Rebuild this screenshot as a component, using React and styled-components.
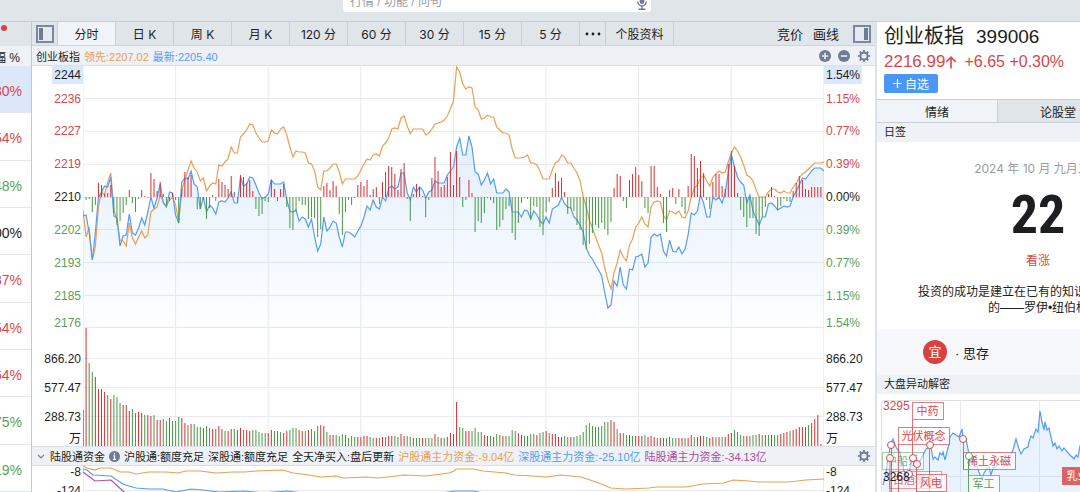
import React from "react";

import styled, { createGlobalStyle, css } from "styled-components";

const COLOR = {
  red: "#d9474a",
  green: "#57a158",
  black: "#1c1e22",
  orange: "#ea9f52",
  blue: "#559cf6",
  purple: "#b04aa8",
  icon: "#6f7b92",
  bar: "#e0e5ea",
  soft: "#eef1f6",
  line: "#c9ced6",
  grid: "#e8eaed",
};

const STEP = 741 / 240;

const LEAD = [
  144, 171, 161, 194, 181, 141, 126, 129, 116, 107, 144, 154, 174, 175, 180, 157, 172, 178, 171, 165,
  172, 169, 146, 143, 141, 129, 136, 140, 134, 131, 139, 156, 124, 114, 104, 95, 102, 106, 115, 112,
  125, 120, 117, 118, 99, 100, 96, 93, 81, 87, 87, 71, 68, 64, 58, 59, 67, 72, 76, 76,
  75, 64, 67, 68, 63, 61, 69, 81, 91, 85, 86, 86, 87, 97, 98, 105, 121, 124, 105, 105,
  102, 98, 98, 106, 118, 113, 113, 113, 113, 110, 104, 98, 93, 94, 89, 88, 90, 80, 77, 72,
  63, 62, 63, 52, 50, 60, 68, 63, 63, 63, 63, 69, 67, 63, 58, 57, 56, 54, 50, 43,
  35, 1, 6, 18, 23, 21, 22, 41, 44, 53, 52, 49, 51, 51, 61, 64, 67, 67, 69, 83,
  92, 92, 92, 91, 89, 97, 97, 99, 105, 113, 113, 113, 104, 97, 95, 89, 91, 97, 97, 102,
  107, 115, 131, 141, 154, 162, 171, 179, 187, 202, 214, 223, 207, 197, 184, 191, 195, 179, 173, 161,
  157, 151, 158, 161, 141, 136, 135, 136, 149, 154, 145, 146, 148, 145, 151, 152, 145, 131, 122, 119,
  112, 109, 115, 120, 111, 108, 105, 107, 106, 96, 87, 81, 85, 91, 99, 109, 111, 115, 124, 131,
  131, 131, 126, 123, 123, 126, 127, 125, 127, 127, 121, 117, 112, 108, 106, 103, 100, 97, 97, 97,
  96,
];

const LATEST = [
  150, 149, 167, 194, 167, 132, 126, 120, 121, 111, 150, 152, 180, 170, 169, 148, 167, 169, 162, 152,
  159, 146, 131, 142, 132, 118, 137, 141, 126, 127, 149, 157, 116, 112, 113, 105, 118, 121, 143, 131,
  146, 139, 142, 148, 136, 135, 136, 132, 126, 137, 137, 111, 120, 118, 111, 112, 119, 127, 133, 131,
  128, 114, 118, 118, 118, 116, 134, 145, 146, 144, 155, 151, 153, 161, 153, 171, 185, 178, 151, 165,
  161, 155, 157, 171, 181, 166, 166, 168, 171, 165, 160, 151, 140, 144, 134, 141, 143, 131, 135, 122,
  120, 123, 121, 107, 107, 127, 134, 121, 126, 121, 124, 132, 126, 124, 115, 117, 117, 117, 109, 105,
  101, 81, 72, 89, 89, 70, 81, 106, 108, 119, 114, 107, 118, 113, 127, 127, 127, 123, 126, 146,
  146, 146, 151, 144, 145, 153, 145, 149, 155, 158, 151, 157, 143, 141, 139, 131, 138, 141, 142, 151,
  154, 159, 166, 182, 189, 193, 199, 204, 210, 227, 242, 239, 215, 220, 201, 219, 223, 203, 204, 191,
  190, 188, 201, 197, 171, 168, 170, 168, 185, 190, 174, 185, 186, 181, 188, 183, 169, 147, 149, 145,
  129, 137, 151, 151, 131, 134, 131, 137, 127, 106, 89, 101, 111, 116, 119, 137, 129, 145, 152, 159,
  151, 151, 138, 137, 140, 144, 142, 140, 141, 140, 131, 125, 119, 112, 113, 109, 105, 102, 102, 102,
  105,
];

// above zero: buying, below zero: selling
const FORCE = [
  0, -3, -2, -15, -8, 14, 12, 3, 4, 12, -16, -28, -24, -16, -8, 7, -6, -15, -2, 7,
  1, -1, 24, 18, 6, 15, 3, -9, -4, 4, -3, -26, 8, 25, 20, 22, 0, -12, -12, -3,
  -22, -11, 2, -4, 18, 15, 12, 8, 21, 5, -6, 22, 20, 14, 17, 6, -12, -19, -17, -4,
  -5, 17, 8, -4, 8, 13, -10, -31, -33, -15, -4, -8, -8, -22, -20, -21, -40, -32, 11, 14,
  7, 16, 11, -17, -38, -15, -3, -8, -1, 12, 15, 11, 17, 2, 8, 10, -7, 15, 25, 31,
  30, 23, 7, 28, 34, -2, -24, 3, 13, 10, 1, -20, -3, 19, 40, 26, 10, 12, 20, 45,
  12, 46, 20, -10, -3, 17, 4, -35, -24, -26, -16, -1, -3, -6, -33, -30, -23, -12, -9, -36,
  -43, -26, -6, -1, -2, -22, -9, -10, -30, -38, -15, -5, 9, 24, 16, 19, 5, -17, -12, -14,
  -28, -33, -48, -52, -47, -36, -28, -31, -26, -32, -38, -25, 9, 23, 21, -4, -11, 17, 23, 30,
  22, 16, -11, -16, 31, 31, 10, 3, -26, -35, 7, 9, -7, 8, -10, -17, 11, 43, 41, 29,
  36, 24, -3, -12, 15, 23, 23, 11, 8, 33, 46, 31, 4, -13, -20, -30, -21, -21, -37, -39,
  -20, -10, 3, 10, 1, -13, -9, -2, -4, -5, 6, 14, 21, 17, 8, 7, 10, 10, 10, 10,
];

// negative values are the minutes that closed lower
const VOLUME = [
  0, 118, -83, -74, 69, 57, 57, 54, -51, 47, -51, -49, -43, 41, 41, 35, -37, -33, 34, 33,
  -31, 31, 30, -31, 26, 26, -27, -25, 28, -25, -25, -29, 28, 23, -21, 22, -22, -19, -19, 18,
  -20, -18, 17, -17, 20, 17, -15, 15, 17, -17, 16, 18, -16, 16, 15, -16, -16, -14, -13, -13,
  13, 16, -15, -15, -14, 13, 15, -16, -18, -18, 16, 15, -15, 16, -17, -15, -20, 21, 20, -14,
  11, 11, -11, -10, -12, 11, -8, -10, -9, 9, 9, 10, 10, -9, -8, 8, -8, 9, -9, 10,
  10, -10, -9, 12, 10, -10, -9, 8, -8, -8, 8, -8, -8, -8, 12, -9, 8, -8, 9, 13,
  12, 44, -19, -18, 15, 15, -15, -18, -14, -14, 11, 10, -10, 9, -12, -11, 10, -10, -10, -16,
  -15, 13, 11, -10, 10, -12, -12, 11, -13, -14, 15, -13, 12, 12, 9, 9, -10, -9, 9, -9,
  -10, -11, -14, -21, -23, -20, -19, -19, -20, -24, -24, 26, 24, -17, 13, -13, -11, 11, -10, 10,
  10, 10, -11, 9, 10, 9, -8, 8, 8, -8, 9, -8, -8, 8, 8, -8, 8, 11, -9, 9,
  10, -10, -9, 8, 9, -9, 9, -9, 9, 12, 13, -16, -14, -11, -10, 10, -10, -11, -11, 12,
  -11, 11, -11, 11, -11, -11, 12, 13, 14, -15, 16, 17, 19, 19, 19, -21, 23, 27, 31, 2,
  0, -44,
];

const FUND_SH =
  "0,0 4,2 12,4 17,2 28,2 37,6 46,6 53,8 66,6 83,6 95,7 103,5 117,5 133,7 150,6 162,6 173,5 200,4 210,7 226,9 238,11 253,10 260,12 283,11 296,12 321,9 343,10 366,7 371,5 373,3 390,3 400,5 423,7 431,9 450,10 463,11 478,9 498,11 513,16 528,22 543,23 566,22 573,21 603,21 620,18 641,17 650,14 666,15 676,16 706,16 723,14 741,13";
const FUND_SZ =
  "0,3 4,4 10,9 28,10 40,18 46,20 53,22 66,23 80,23 93,26 108,23 120,24 136,26 161,25 180,27 204,25 240,30 340,30 372,25 391,25 420,32 741,44";
const FUND_ALL = "0,6 12,15 28,14 41,26 60,36 741,56";

const MINI =
  "1,84 4,72 6,58 9,42 11,38 14,46 18,52 22,70 26,76 30,58 34,62 38,60 44,48 49,46 51,58 53,56 56,59 58,52 60,54 61,51 63,59 65,51 67,43 68,36 71,32 74,34 77,36 80,28 81,36 84,38 87,53 89,52 91,58 93,66 95,65 97,71 100,78 102,72 104,69 107,66 109,74 111,67 114,66 117,61 121,60 126,62 129,53 131,49 134,38 137,48 139,53 142,48 146,46 147,41 149,35 151,37 154,28 156,31 158,10 160,21 162,29 163,21 165,29 167,27 169,36 171,45 173,42 175,48 177,45 180,50 182,47 186,52 189,55 192,58 194,54 196,56 198,45 210,52 240,40 312,60";

const QUOTES = [
  ["+0.30%", "red"],
  ["+0.54%", "red"],
  ["-0.48%", "green"],
  ["0.00%", "black"],
  ["+0.37%", "red"],
  ["+0.54%", "red"],
  ["+0.64%", "red"],
  ["-0.75%", "green"],
  ["-0.19%", "green"],
];

const PERIODS = ["分时", "日 K", "周 K", "月 K", "120 分", "60 分", "30 分", "15 分", "5 分"];

const PRICES = [
  ["2236", "1.15%", "red", 31],
  ["2227", "0.77%", "red", 33],
  ["2219", "0.39%", "red", 33],
  ["2210", "0.00%", "black", 33],
  ["2202", "0.39%", "green", 33],
  ["2193", "0.77%", "green", 33],
  ["2185", "1.15%", "green", 33],
  ["2176", "1.54%", "green", 20],
];

const VOLUMES = ["866.20", "577.47", "288.73", "万"];

const GlobalStyle = createGlobalStyle`
  * {
    box-sizing: border-box;
  }
  body {
    margin: 0;
    color: ${COLOR.black};
    background: #fff;
    font-family: "Liberation Sans", "Noto Sans CJK SC", sans-serif;
    font-size: 12px;
  }
  button {
    padding: 0;
    border: 0;
    background: none;
    color: inherit;
    font: inherit;
    cursor: pointer;
  }
  svg {
    display: block;
    flex-shrink: 0;
  }
`;

const Page = styled.div`
  display: flex;
  flex-direction: column;
  height: 100vh;
  overflow: hidden;
`;
const TopBar = styled.header`
  display: flex;
  justify-content: center;
  align-items: flex-start;
  flex-shrink: 0;
  height: 22px;
  padding-right: 86px;
  background: ${COLOR.bar};
  border-bottom: 1px solid ${COLOR.line};
`;
const Search = styled.label`
  display: flex;
  align-items: center;
  width: 308px;
  height: 20px;
  margin-top: -8px;
  padding: 0 4px 0 7px;
  border-radius: 3px;
  background: #fff;
`;
const SearchInput = styled.input`
  flex: 1;
  min-width: 0;
  padding: 0;
  border: 0;
  outline: 0;
  background: none;
  font: inherit;

  &::placeholder {
    color: #979ca4;
  }
`;
const Body = styled.div`
  display: grid;
  grid-template-columns: 32px minmax(0, 1fr) 205px;
  flex: 1;
  min-height: 0;
`;

const List = styled.aside`
  display: flex;
  flex-direction: column;
  overflow: hidden;
  border-right: 1px solid #c0c8d4;
`;
const ListTop = styled.div`
  flex-shrink: 0;
  height: 24px;
  padding: 3px 1px;
  background: ${COLOR.bar};
`;
const Dot = styled.div`
  width: 6px;
  height: 6px;
  border-radius: 50%;
  background: #dc3f3f;
`;
const ListHead = styled.div`
  display: flex;
  justify-content: flex-end;
  align-items: center;
  flex-shrink: 0;
  height: 20px;
  padding-right: 11px;
  background: ${COLOR.soft};
  white-space: nowrap;
`;
const ListCell = styled.div`
  display: flex;
  justify-content: flex-end;
  align-items: center;
  flex: 1;
  padding: 4px 9px 0 0;
  border-bottom: 1px solid #e3e6ea;
  background: ${({ $active }) => ($active ? "#dce8fa" : "#fff")};
  color: ${({ $tone }) => COLOR[$tone]};
  font-size: 14px;
`;

const Center = styled.main`
  display: flex;
  flex-direction: column;
  min-width: 0;
  overflow: hidden;
`;
const Tabs = styled.nav`
  display: flex;
  flex-shrink: 0;
  height: 24px;
  background: ${COLOR.bar};
  border-bottom: 1px solid #cfd4db;
  font-family: Inter, "Noto Sans CJK SC", sans-serif;
`;
const IconButton = styled.button`
  width: 26px;
  padding-left: 4px;
  border-right: 1px solid ${COLOR.line};
`;
const Tab = styled.button`
  display: flex;
  justify-content: center;
  align-items: center;
  width: ${({ $w = 58 }) => $w}px;
  border-right: 1px solid ${COLOR.line};
  background: ${({ $active }) => ($active ? "#f0f3f7" : "transparent")};
  white-space: nowrap;
`;
const Tools = styled.div`
  display: flex;
  gap: 10px;
  margin-left: auto;
  padding-right: 4px;
`;
const ToolButton = styled.button`
  font-size: 13px;

  &:last-child {
    padding-left: 4px;
  }
`;
const InfoBar = styled.div`
  display: flex;
  align-items: center;
  gap: 4px;
  flex-shrink: 0;
  height: 20px;
  padding: 0 4px;
  background: ${COLOR.soft};
  border-bottom: 1px solid #dcdfe4;
  font-size: 11px;
  white-space: nowrap;
  ${({ $top }) =>
    $top &&
    css`
      border-top: 1px solid #dcdfe4;
    `}
`;
const InfoText = styled.span`
  color: ${({ $tone = "black" }) => COLOR[$tone]};
`;
const InfoTools = styled.div`
  display: flex;
  align-items: center;
  gap: 7px;
  margin-left: auto;
`;
const PlainButton = styled.button`
  display: flex;
`;
const FundName = styled.button`
  display: flex;
  align-items: center;
  gap: 5px;
  padding-left: 1px;
`;
const ChartRow = styled.div`
  display: grid;
  grid-template-columns: 51px minmax(0, 1fr) 51px;
  flex-shrink: 0;
`;
const Plot = styled.svg`
  width: 100%;
  height: ${({ $h }) => $h}px;
`;
const AxisColumn = styled.div`
  display: flex;
  flex-direction: column;
  align-items: ${({ $left }) => ($left ? "flex-end" : "flex-start")};
`;
const AxisPeak = styled.div`
  height: 18px;
  padding: 0 2px;
  background: #dbe7fb;
  line-height: 19px;
`;
const AxisLabel = styled.div`
  height: ${({ $h }) => $h}px;
  padding: 0 2px;
  color: ${({ $tone = "black" }) => COLOR[$tone]};
  line-height: ${({ $h }) => $h}px;
`;
const VolumeLabels = styled.div`
  padding-top: 12px;
  text-align: ${({ $left }) => ($left ? "right" : "left")};
`;

const Side = styled.aside`
  overflow: hidden;
  border-left: 2px solid #dde2e8;
`;
const SideInner = styled.div`
  min-width: 322px;
`;
const Summary = styled.div`
  height: 77px;
  padding: 0 7px;
`;
const Title = styled.div`
  display: flex;
  align-items: baseline;
  gap: 12px;
  height: 28px;
  font-size: 20px;
  line-height: 28px;
`;
const Code = styled.span`
  font-size: 19px;
`;
const Price = styled.div`
  display: flex;
  align-items: center;
  height: 24px;
  color: ${COLOR.red};
  font-size: 17px;
`;
const Change = styled.span`
  padding-left: 7px;
  font-size: 16px;
`;
const AddButton = styled.button`
  display: flex;
  justify-content: center;
  align-items: center;
  gap: 3px;
  width: 54px;
  height: 19px;
  border-radius: 2px;
  background: #4a97f6;
  color: #fff;
`;
const SideTabs = styled.div`
  display: flex;
  height: 24px;
  background: ${COLOR.bar};
  border: 1px solid ${COLOR.line};
  border-width: 1px 0;
`;
const SideTab = styled.button`
  width: 121px;
  border-right: 1px solid ${COLOR.line};
  background: ${({ $active }) => ($active ? "#f0f3f7" : "transparent")};
`;
const Section = styled.div`
  height: 19px;
  padding-left: 7px;
  background: ${COLOR.soft};
  font-size: 11px;
  line-height: 18px;
`;
const Calendar = styled.div`
  height: 187px;
  padding-top: 18px;
  text-align: center;
`;
const Today = styled.div`
  color: #9a9da3;
  font-family: Inter, "Noto Sans CJK SC", sans-serif;
  line-height: 18px;
`;
const Day = styled.div`
  height: 74px;
  font-family: "Roboto Condensed", Roboto, sans-serif;
  font-size: 54px;
  font-weight: 700;
  line-height: 74px;
`;
const Mood = styled.div`
  color: ${COLOR.red};
  line-height: 18px;
`;
const Saying = styled.p`
  margin: 14px 0 0;
  line-height: 16px;
`;
const Advice = styled.div`
  display: flex;
  align-items: center;
  gap: 8px;
  height: 46px;
  padding-left: 46px;
  background: #f7f8fb;
  font-size: 13px;
`;
const Badge = styled.span`
  width: 24px;
  height: 24px;
  border-radius: 50%;
  background: #d8413f;
  color: #fff;
  line-height: 24px;
  text-align: center;
`;
const MoveBox = styled.div`
  margin: 6px 4px 0;
  border: 1px solid #dcdfe4;
  border-radius: 4px;
`;

const toPoints = (values) => values.map((v, i) => `${(i * STEP).toFixed(1)},${v}`).join(" ");

const Gear = () => (
  <svg width="14" height="14" viewBox="0 0 14 14" aria-hidden="true">
    <circle cx="7" cy="7" r="3.6" fill="none" stroke={COLOR.icon} strokeWidth="2" />
    {[0, 45, 90, 135, 180, 225, 270, 315].map((deg) => (
      <path key={deg} d="M5.9 2.8 L6.2 0.9 H7.8 L8.1 2.8 Z" fill={COLOR.icon} transform={`rotate(${deg} 7 7)`} />
    ))}
  </svg>
);

const Sign = ({ plus }) => (
  <svg width="12" height="12" viewBox="0 0 12 12" aria-hidden="true">
    <circle cx="6" cy="6" r="6" fill={COLOR.icon} />
    <path d={plus ? "M2.8 6H9.2M6 2.8V9.2" : "M2.8 6H9.2"} stroke={COLOR.soft} strokeWidth="1.6" />
  </svg>
);

const PanelIcon = ({ right }) => (
  <svg width="18" height="18" viewBox="0 0 18 18" aria-hidden="true">
    <rect x="1" y="1" width="16" height="16" fill="#e6eaef" stroke="#7b87a0" strokeWidth="2" />
    <rect x={right ? 11 : 3} y="3" width="4" height="12" fill={COLOR.icon} />
  </svg>
);

const Mic = () => (
  <svg width="10" height="16" viewBox="0 0 10 16" aria-hidden="true">
    <rect x="2.7" y="1" width="4.6" height="9" rx="2.3" fill={COLOR.icon} />
    <path d="M0.8 7.5a4.2 4.4 0 0 0 8.4 0M5 12v3M1.6 15.2h6.8" fill="none" stroke={COLOR.icon} strokeWidth="1.4" />
  </svg>
);

const Bars = ({ values, base, signed }) =>
  values.map((v, i) => {
    const h = Math.abs(v);
    return (
      <rect
        key={i}
        x={(i * STEP).toFixed(2) - 0.5}
        y={signed && v < 0 ? base : base - h}
        width="1"
        height={h}
        fill={v < 0 ? "#459945" : "#d3302f"}
      />
    );
  });

const VLines = ({ height }) =>
  [0, 1, 2, 3, 4, 5, 6, 7, 8].map((i) => (
    <line key={i} x1={i * 92.6} x2={i * 92.6} y1="0" y2={height} stroke={COLOR.grid} />
  ));

const MainChart = () => (
  <Plot $h={380} viewBox="0 0 741 380" preserveAspectRatio="none" role="img" aria-label="创业板指分时">
    <defs>
      <linearGradient id="area" x1="0" y1="70" x2="0" y2="262" gradientUnits="userSpaceOnUse">
        <stop offset="0" stopColor="#4a9bf0" stopOpacity="0.16" />
        <stop offset="1" stopColor="#4a9bf0" stopOpacity="0.01" />
      </linearGradient>
    </defs>
    <VLines height={380} />
    {[32.5, 65.5, 98.5, 131.5, 163.5, 196.5, 229.5, 261.5, 292.5, 321.5, 350.5].map((y) => (
      <line key={y} x1="0" x2="741" y1={y} y2={y} stroke={COLOR.grid} />
    ))}
    <polygon points={`0,262 ${toPoints(LATEST)} 741,262`} fill="url(#area)" />
    <polyline points={toPoints(LEAD)} fill="none" stroke={COLOR.orange} strokeWidth="1.2" />
    <polyline points={toPoints(LATEST)} fill="none" stroke={COLOR.blue} strokeWidth="1.2" />
    <Bars values={FORCE} base={131} signed />
    <Bars values={VOLUME} base={380} />
    <rect x="0" y="344" width="1" height="36" fill="#8a8f98" />
  </Plot>
);

const FundChart = () => (
  <Plot $h={60} viewBox="0 0 741 60" preserveAspectRatio="none" role="img" aria-label="陆股通资金">
    <path d="M0 24.5H741M0.5 0V60M740.5 0V60" stroke={COLOR.grid} fill="none" />
    <polyline points={FUND_SH} fill="none" stroke={COLOR.orange} strokeWidth="1.2" />
    <polyline points={FUND_SZ} fill="none" stroke={COLOR.blue} strokeWidth="1.2" />
    <polyline points={FUND_ALL} fill="none" stroke={COLOR.purple} strokeWidth="1.2" />
  </Plot>
);

const Flag = ({ x, y, w, text, color = COLOR.red, solid, faded }) => (
  <g opacity={faded ? 0.75 : 1}>
    <rect
      x={x + 0.5}
      y={y + 0.5}
      width={w}
      height="17"
      fill={solid ? "#dc6263" : "#fff"}
      fillOpacity={solid ? 1 : 0.65}
      stroke={color}
      strokeOpacity="0.7"
    />
    <text x={x + w / 2} y={y + 13} textAnchor="middle" fontSize="11" fill={solid ? "#fff" : color}>
      {text}
    </text>
  </g>
);

const Pin = ({ x, y, color = COLOR.red }) => <circle cx={x} cy={y} r="3.5" fill="#fff" stroke={color} />;

const MoveChart = () => (
  <svg width="312" height="110" viewBox="0 0 312 110" role="img" aria-label="大盘异动解密">
    <path d="M78.5 0V110M157.5 0V110M236.5 0V110M0 75.5H312" stroke={COLOR.grid} fill="none" />
    <polygon points={`0,110 ${MINI} 312,110`} fill="#4a9bf0" fillOpacity="0.12" />
    <polyline points={MINI} fill="none" stroke={COLOR.blue} strokeWidth="1.2" />
    <Flag x={0} y={51} w={41} text="中船系" color={COLOR.green} faded />
    <Flag x={7} y={70} w={52} text="白酒概念" faded />
    <Flag x={16} y={26} w={51} text="光伏概念" />
    <Flag x={30} y={1} w={31} text="中药" />
    <Flag x={81} y={51} w={52} text="稀土永磁" />
    <path
      d="M9.5 44V110M8 57V110M16.5 43V110M30.5 19V57M47.5 44V110M34.5 63V91M81.5 38V68"
      stroke={COLOR.red}
      strokeOpacity="0.8"
      fill="none"
    />
    <path d="M86.5 55V92" stroke={COLOR.green} />
    <Pin x={9} y={44} />
    <Pin x={8} y={57} />
    <Pin x={27} y={73} />
    <Pin x={31} y={57} />
    <Pin x={35} y={63} />
    <Pin x={48} y={44} />
    <Pin x={81} y={38} />
    <Pin x={87} y={55} color={COLOR.green} />
    <Flag x={34} y={73} w={30} text="风电" />
    <Flag x={86} y={74} w={31} text="军工" color={COLOR.green} />
    <Flag x={180} y={66} w={31} text="乳业" solid />
    <text x="1" y="9" fontSize="12" fill={COLOR.red}>
      3295
    </text>
    <text x="1" y="80" fontSize="12" fill={COLOR.black}>
      3268
    </text>
  </svg>
);

const Axis = ({ isLeft }) => {
  return (
    <AxisColumn $left={isLeft}>
      <AxisPeak>{isLeft ? "2244" : "1.54%"}</AxisPeak>
      {PRICES.map(([price, percent, tone, h]) => (
        <AxisLabel key={price} $h={h} $tone={tone}>
          {isLeft ? price : percent}
        </AxisLabel>
      ))}
      <VolumeLabels $left={isLeft}>
        {VOLUMES.map((v) => (
          <AxisLabel key={v} $h={v === "万" ? 14 : 29}>
            {v}
          </AxisLabel>
        ))}
      </VolumeLabels>
    </AxisColumn>
  );
};

const FundAxis = ({ isLeft }) => {
  return (
    <AxisColumn $left={isLeft}>
      <AxisLabel $h={13}>-8</AxisLabel>
      <AxisLabel $h={24}>-124</AxisLabel>
    </AxisColumn>
  );
};

const QuoteList = () => {
  return (
    <List>
      <ListTop>
        <Dot />
      </ListTop>
      <ListHead>涨幅 %</ListHead>
      {QUOTES.map(([value, tone], i) => (
        <ListCell key={i} $tone={tone} $active={i === 0}>
          {value}
        </ListCell>
      ))}
    </List>
  );
};

const ChartPanel = () => {
  return (
    <Center>
      <Tabs>
        <IconButton aria-label="左侧栏">
          <PanelIcon />
        </IconButton>
        {PERIODS.map((name, i) => (
          <Tab key={name} $active={i === 0}>
            {name}
          </Tab>
        ))}
        <Tab $w={26} aria-label="更多">
          <svg width="16" height="4" viewBox="0 0 16 4" aria-hidden="true">
            <path d="M2 2h0M8 2h0M14 2h0" stroke={COLOR.black} strokeWidth="2.8" strokeLinecap="round" />
          </svg>
        </Tab>
        <Tab $w={68}>个股资料</Tab>
        <Tools>
          <ToolButton>竞价</ToolButton>
          <ToolButton>画线</ToolButton>
          <ToolButton aria-label="右侧栏">
            <PanelIcon right />
          </ToolButton>
        </Tools>
      </Tabs>

      <InfoBar>
        <InfoText>创业板指</InfoText>
        <InfoText $tone="orange">领先:2207.02</InfoText>
        <InfoText $tone="blue">最新:2205.40</InfoText>
        <InfoTools>
          <PlainButton aria-label="放大">
            <Sign plus />
          </PlainButton>
          <PlainButton aria-label="缩小">
            <Sign />
          </PlainButton>
          <PlainButton aria-label="设置">
            <Gear />
          </PlainButton>
        </InfoTools>
      </InfoBar>

      <ChartRow>
        <Axis isLeft />
        <MainChart />
        <Axis />
      </ChartRow>

      <InfoBar $top>
        <FundName>
          <svg width="8" height="5" viewBox="0 0 8 5" aria-hidden="true">
            <path d="M1 0.8L4 3.8L7 0.8" fill="none" stroke={COLOR.icon} strokeWidth="1.2" />
          </svg>
          陆股通资金
        </FundName>
        <svg width="11" height="11" viewBox="0 0 12 12" aria-hidden="true">
          <circle cx="6" cy="6" r="6" fill={COLOR.icon} />
          <path d="M6 2.2v1.6M4.8 5.2H6V9M4.5 9.2h3" stroke="#fff" strokeWidth="1.4" fill="none" />
        </svg>
        <InfoText>沪股通:额度充足</InfoText>
        <InfoText>深股通:额度充足</InfoText>
        <InfoText>全天净买入:盘后更新</InfoText>
        <InfoText $tone="orange">沪股通主力资金:-9.04亿</InfoText>
        <InfoText $tone="blue">深股通主力资金:-25.10亿</InfoText>
        <InfoText $tone="purple">陆股通主力资金:-34.13亿</InfoText>
        <InfoTools>
          <PlainButton aria-label="资金设置">
            <Gear />
          </PlainButton>
        </InfoTools>
      </InfoBar>

      <ChartRow>
        <FundAxis isLeft />
        <FundChart />
        <FundAxis />
      </ChartRow>
    </Center>
  );
};

const SidePanel = () => {
  return (
    <Side>
      <SideInner>
        <Summary>
          <Title>
            创业板指
            <Code>399006</Code>
          </Title>
          <Price>
            2216.99
            <svg width="12" height="13" viewBox="0 0 12 13" aria-hidden="true">
              <path d="M6 12.5V1.5M1.2 6L6 1.2L10.8 6" fill="none" stroke={COLOR.red} strokeWidth="1.6" />
            </svg>
            <Change>+6.65 +0.30%</Change>
          </Price>
          <AddButton>
            <svg width="9" height="9" viewBox="0 0 9 9" aria-hidden="true">
              <path d="M4.5 0V9M0 4.5H9" stroke="#fff" strokeWidth="1.2" />
            </svg>
            自选
          </AddButton>
        </Summary>
        <SideTabs>
          <SideTab $active>情绪</SideTab>
          <SideTab>论股堂</SideTab>
        </SideTabs>
        <Section>日签</Section>
        <Calendar>
          <Today>2024 年 10 月 九月二十</Today>
          <Day>22</Day>
          <Mood>看涨</Mood>
          <Saying>
            投资的成功是建立在已有的知识和经验基础上
            <br />
            的——罗伊•纽伯格
          </Saying>
        </Calendar>
        <Advice>
          <Badge>宜</Badge>
          · 思存
        </Advice>
        <Section>大盘异动解密</Section>
        <MoveBox>
          <MoveChart />
        </MoveBox>
      </SideInner>
    </Side>
  );
};

const App = () => {
  return (
    <Page>
      <GlobalStyle />
      <TopBar>
        <Search>
          <SearchInput type="text" placeholder="行情 / 功能 / 问句" aria-label="搜索" />
          <Mic />
        </Search>
      </TopBar>
      <Body>
        <QuoteList />
        <ChartPanel />
        <SidePanel />
      </Body>
    </Page>
  );
};

export default App;
